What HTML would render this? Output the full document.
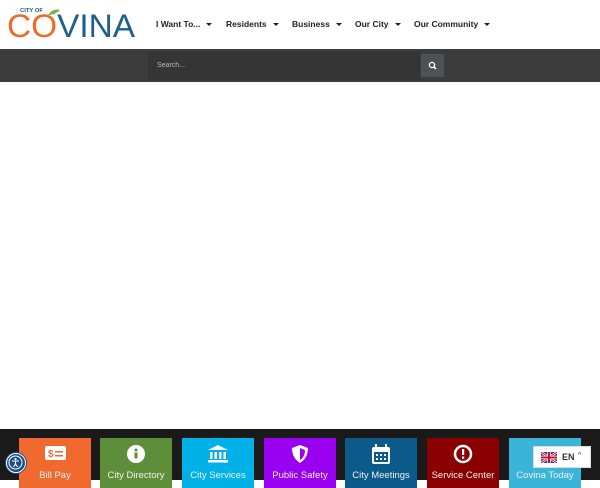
<!DOCTYPE html>
<html><head><meta charset="utf-8"><style>
*{margin:0;padding:0;box-sizing:border-box}
body{width:600px;height:480px;overflow:hidden;background:#fff;font-family:"Liberation Sans",sans-serif;position:relative}
.hdr{position:absolute;left:0;top:0;width:600px;height:49px;background:#fff}
.nav{position:absolute;top:19px;font-size:8.5px;font-weight:bold;color:#222;white-space:nowrap}
.nav span.c{display:inline-block;width:0;height:0;border-left:3px solid transparent;border-right:3px solid transparent;border-top:3.5px solid #222;margin-left:6px;vertical-align:middle}
.band{position:absolute;left:0;top:49px;width:600px;height:33px;background:#3c3c3c}
.sbox{position:absolute;left:148px;top:52px;width:272px;height:28px;background:#353535;color:#bbb;font-size:7px;padding:10px 0 0 9px}
.sbtn{position:absolute;left:421px;top:54px;width:23px;height:23px;background:#4d5257}
.foot{position:absolute;left:0;top:429px;width:600px;height:51px;background:#1a1a1a}
.tile{position:absolute;top:438px;width:72px;height:50px;color:#fff;font-size:9.5px;text-align:center}
.tile svg{position:absolute;left:26px;top:6px}
.tile .t{position:absolute;left:0;right:0;top:32px;color:#f0f0f0;white-space:nowrap}
.acc{position:absolute;left:6px;top:453px;width:20px;height:20px;border-radius:50%;background:#1d4f86;border:1.5px solid #fff;box-shadow:0 0 0 1px #1d4f86}
.lang{position:absolute;left:533px;top:446px;width:58px;height:22px;background:#fff;border:1px solid #ddd;font-size:9px;font-weight:bold;color:#333}
</style></head><body>
<div class="hdr">
 <svg style="position:absolute;left:0;top:0" width="145" height="45">
  <text x="20" y="12" font-size="5.5" font-weight="bold" fill="#1e5c8a" font-family="Liberation Sans" textLength="23" lengthAdjust="spacingAndGlyphs">CITY OF</text>
  <path d="M48 15 Q53 8 60 10 Q55 15 48 15Z" fill="#6cb33f"/>
  <text x="7" y="37" font-size="32" fill="#1f5f8e" font-family="Liberation Sans" textLength="128" lengthAdjust="spacingAndGlyphs"><tspan fill="#ec6b26">CO</tspan>VINA</text>
 </svg>
 <div class="nav" style="left:156px">I Want To...<span class="c"></span></div>
 <div class="nav" style="left:226px">Residents<span class="c"></span></div>
 <div class="nav" style="left:292px">Business<span class="c"></span></div>
 <div class="nav" style="left:355px">Our City<span class="c"></span></div>
 <div class="nav" style="left:414px">Our Community<span class="c"></span></div>
</div>
<div class="band"></div>
<div class="sbox">Search...</div>
<div class="sbtn"><svg width="23" height="23"><circle cx="11" cy="11" r="2.6" stroke="#fff" stroke-width="1.3" fill="none"/><path d="M13 13 L15 15" stroke="#fff" stroke-width="1.6"/></svg></div>
<div class="foot"></div>
<div class="tile" style="left:19px;background:#f06a30"><svg width="22" height="18"><rect x="0" y="2" width="21" height="14" rx="2" fill="#fff"/><text x="3" y="13" font-size="10" font-weight="bold" fill="#f06a30" font-family="Liberation Sans">$</text><rect x="10" y="7" width="8" height="1.5" fill="#f06a30"/><rect x="10" y="11" width="8" height="1.5" fill="#f06a30"/></svg><div class="t">Bill Pay</div></div>
<div class="tile" style="left:100px;background:#5f8e3b"><svg width="22" height="20"><circle cx="10" cy="10" r="9" fill="#fff"/><circle cx="10" cy="6" r="1.5" fill="#5f8e3b"/><rect x="8.5" y="8.5" width="3" height="6" fill="#5f8e3b"/></svg><div class="t">City Directory</div></div>
<div class="tile" style="left:182px;background:#00b1e8"><svg width="22" height="20"><path d="M10 1 L20 6 L0 6Z" fill="#fff"/><rect x="2" y="8" width="2.5" height="7" fill="#fff"/><rect x="6.5" y="8" width="2.5" height="7" fill="#fff"/><rect x="11" y="8" width="2.5" height="7" fill="#fff"/><rect x="15.5" y="8" width="2.5" height="7" fill="#fff"/><rect x="0" y="16" width="20" height="2.5" fill="#fff"/></svg><div class="t">City Services</div></div>
<div class="tile" style="left:264px;background:#9900f0"><svg width="22" height="20"><path d="M10 1 L18 4 Q18 14 10 19 Q2 14 2 4Z" fill="#fff"/><path d="M10 4 L15 6 Q15 13 10 16Z" fill="#9900f0"/></svg><div class="t">Public Safety</div></div>
<div class="tile" style="left:345px;background:#0b5a8a"><svg width="22" height="22"><rect x="1" y="3" width="18" height="17" rx="2" fill="#fff"/><rect x="3" y="8" width="14" height="10" fill="#0b5a8a"/><rect x="4" y="0" width="2" height="5" fill="#fff"/><rect x="14" y="0" width="2" height="5" fill="#fff"/><g fill="#fff"><rect x="5" y="10" width="2" height="2"/><rect x="9" y="10" width="2" height="2"/><rect x="13" y="10" width="2" height="2"/><rect x="5" y="14" width="2" height="2"/><rect x="9" y="14" width="2" height="2"/><rect x="13" y="14" width="2" height="2"/></g></svg><div class="t">City Meetings</div></div>
<div class="tile" style="left:427px;background:#8b0000"><svg width="22" height="20"><circle cx="10" cy="10" r="8" fill="none" stroke="#fff" stroke-width="2.5"/><rect x="9" y="5" width="2.2" height="6" fill="#fff"/><rect x="9" y="12.5" width="2.2" height="2.2" fill="#fff"/></svg><div class="t">Service Center</div></div>
<div class="tile" style="left:509px;background:#3bb4d9"><div class="t">Covina Today</div></div>
<div class="acc"><svg width="17" height="17"><circle cx="8.5" cy="8.5" r="6.5" fill="none" stroke="#fff" stroke-width="1"/><circle cx="8.5" cy="5" r="1.1" fill="#fff"/><path d="M5 7 L12 7 M8.5 7 L8.5 10 L6.5 13 M8.5 10 L10.5 13" stroke="#fff" stroke-width="1.1" fill="none"/></svg></div>
<div class="lang"><svg style="position:absolute;left:7px;top:5px" width="16" height="11"><rect width="16" height="11" fill="#1f3a8a"/><path d="M0 0 L16 11 M16 0 L0 11" stroke="#fff" stroke-width="2.4"/><path d="M0 0 L16 11 M16 0 L0 11" stroke="#c8102e" stroke-width="1"/><path d="M8 0 V11 M0 5.5 H16" stroke="#fff" stroke-width="3.4"/><path d="M8 0 V11 M0 5.5 H16" stroke="#c8102e" stroke-width="2"/></svg><span style="position:absolute;left:28px;top:5px">EN</span><span style="position:absolute;left:44px;top:5px;font-size:7px;font-weight:normal">^</span></div>
</body></html>
